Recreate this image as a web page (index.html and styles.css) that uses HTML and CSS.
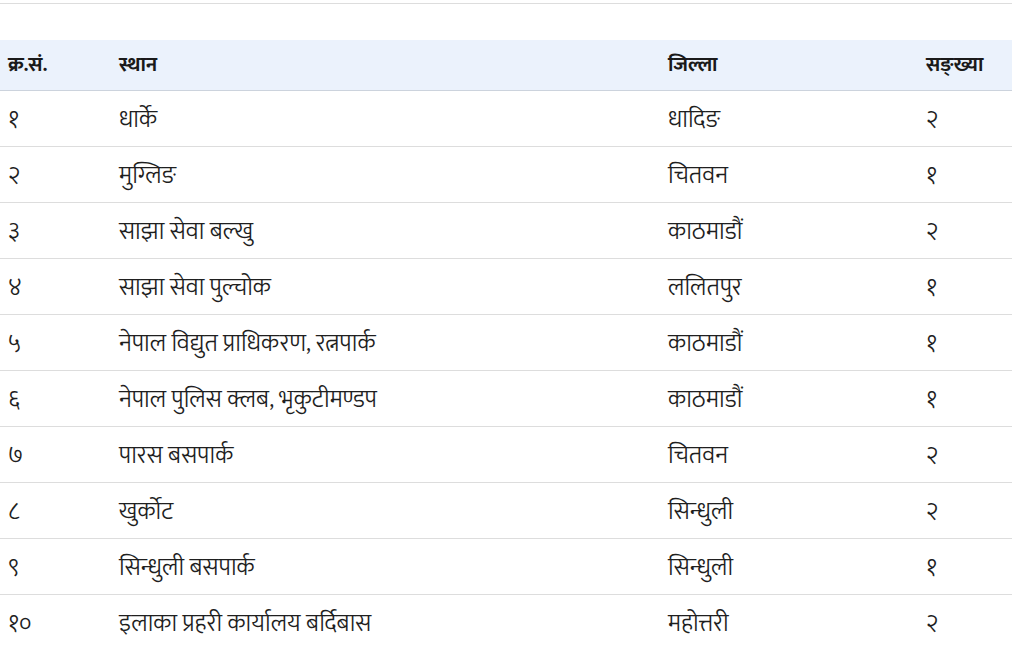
FILE: index.html
```html
<!DOCTYPE html>
<html lang="ne">
<head>
<meta charset="utf-8">
<title>स्थान</title>
<link rel="stylesheet" href="styles.css">
</head>
<body>
<div class="topbar"></div>
<table class="list">
  <colgroup>
    <col class="c-sn">
    <col class="c-place">
    <col class="c-district">
    <col class="c-count">
  </colgroup>
  <thead>
    <tr><th>क्र.सं.</th><th>स्थान</th><th>जिल्ला</th><th>सङ्ख्या</th></tr>
  </thead>
  <tbody>
    <tr><td>१</td><td>धार्के</td><td>धादिङ</td><td>२</td></tr>
    <tr><td>२</td><td>मुग्लिङ</td><td>चितवन</td><td>१</td></tr>
    <tr><td>३</td><td>साझा सेवा बल्खु</td><td>काठमाडौं</td><td>२</td></tr>
    <tr><td>४</td><td>साझा सेवा पुल्चोक</td><td>ललितपुर</td><td>१</td></tr>
    <tr><td>५</td><td>नेपाल विद्युत प्राधिकरण, रत्नपार्क</td><td>काठमाडौं</td><td>१</td></tr>
    <tr><td>६</td><td>नेपाल पुलिस क्लब, भृकुटीमण्डप</td><td>काठमाडौं</td><td>१</td></tr>
    <tr><td>७</td><td>पारस बसपार्क</td><td>चितवन</td><td>२</td></tr>
    <tr><td>८</td><td>खुर्कोट</td><td>सिन्धुली</td><td>२</td></tr>
    <tr><td>९</td><td>सिन्धुली बसपार्क</td><td>सिन्धुली</td><td>१</td></tr>
    <tr><td>१०</td><td>इलाका प्रहरी कार्यालय बर्दिबास</td><td>महोत्तरी</td><td>२</td></tr>
  </tbody>
</table>
</body>
</html>
```
FILE: styles.css
```css
html, body {
  margin: 0;
  padding: 0;
  background: #ffffff;
}
body {
  font-family: "Mukta", "Noto Sans", sans-serif;
  color: #222222;
}
.topbar {
  height: 3px;
  border-bottom: 1px solid #dddddd;
  margin-bottom: 36px;
}
.list {
  width: 100%;
  border-collapse: collapse;
  table-layout: fixed;
}
.c-sn { width: 111px; }
.c-place { width: 549px; }
.c-district { width: 258px; }
.c-count { width: 94px; }
.list th {
  background: #ebf2fc;
  height: 50px;
  padding: 0 8px;
  text-align: left;
  font-size: 20.5px;
  font-weight: 700;
  color: #1a1a1a;
  border-bottom: 1px solid #ccd3dd;
  line-height: 1;
}
.list td {
  height: 52px;
  padding: 3px 8px 0;
  font-size: 24.5px;
  font-weight: 300;
  color: #1f1f1f;
  border-bottom: 1px solid #dddddd;
  line-height: 1;
}
```
